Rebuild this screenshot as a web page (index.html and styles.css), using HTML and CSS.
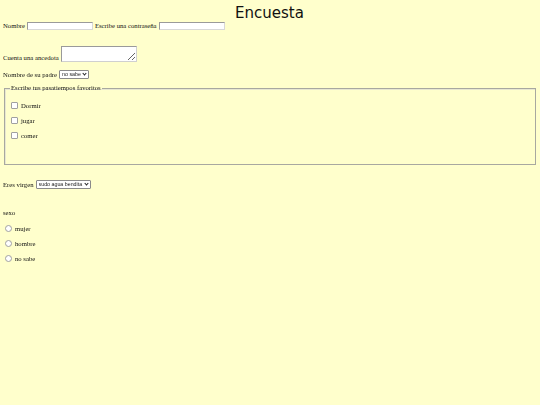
FILE: index.html
```html
<!DOCTYPE html>
<html lang="es">
<head>
<meta charset="utf-8">
<title>Encuesta</title>
<link rel="stylesheet" href="styles.css">
</head>
<body>
<h1 class="title">Encuesta</h1>
<form class="form">
  <div class="row row-first">
    <label>Nombre</label>
    <input type="text" class="field">
    <label>Escribe una contraseña</label>
    <input type="password" class="field">
  </div>
  <div class="row row-textarea">
    <label>Cuenta una ancedota</label>
    <textarea class="area"></textarea>
  </div>
  <div class="row row-padre">
    <label>Nombre de su padre</label>
    <span class="sel"><select class="pick"><option>no sabe</option></select></span>
  </div>
  <fieldset class="box">
    <legend class="legend">Escribe tus pasatiempos favoritos</legend>
    <div class="check"><span class="cb"></span><span>Dormir</span></div>
    <div class="check"><span class="cb"></span><span>jugar</span></div>
    <div class="check"><span class="cb"></span><span>comer</span></div>
  </fieldset>
  <div class="row row-virgen">
    <label>Eres virgen</label>
    <span class="sel"><select class="pick pick-wide"><option>sudo agua bendita</option></select></span>
  </div>
  <div class="sexo">sexo</div>
  <div class="radio"><span class="rb"></span><span>mujer</span></div>
  <div class="radio"><span class="rb"></span><span>hombre</span></div>
  <div class="radio"><span class="rb"></span><span>no sabe</span></div>
</form>
</body>
</html>
```
FILE: styles.css
```css
html, body {
  background: #ffffcc;
}
body {
  margin: 4px 4px 4px 3px;
  font-family: "Liberation Serif", serif;
  font-size: 6.7px;
  color: #111;
}
.title {
  font-family: "DejaVu Sans", sans-serif;
  font-weight: normal;
  font-size: 15px;
  line-height: 18px;
  text-align: center;
  margin: 0;
  color: #111;
}
.row {
  display: flex;
  align-items: flex-end;
  gap: 2px;
  line-height: 8px;
}
.row-first {
  align-items: center;
  height: 8px;
}
.row-textarea {
  margin-top: 16px;
}
.row-padre {
  margin-top: 8px;
  align-items: center;
}
.row-virgen {
  margin-top: 15px;
  align-items: center;
}
.field {
  box-sizing: border-box;
  width: 66px;
  height: 8px;
  margin: 0;
  padding: 0;
  border: 1px solid #9a9a9a;
  border-right-color: #d8d8d8;
  border-bottom-color: #d8d8d8;
  background: #fff;
}
.area {
  box-sizing: border-box;
  width: 76px;
  height: 16px;
  margin: 0;
  padding: 0;
  resize: both;
  border: 1px solid #9a9a9a;
  border-right-color: #d0d0d0;
  border-bottom-color: #d0d0d0;
  background: #fff;
}
.sel {
  position: relative;
  display: inline-block;
  height: 9px;
}
.sel::after {
  content: "";
  position: absolute;
  right: 3px;
  top: 2px;
  width: 2px;
  height: 2px;
  border-right: 1px solid #222;
  border-bottom: 1px solid #222;
  transform: rotate(45deg);
  pointer-events: none;
}
.pick {
  -webkit-appearance: none;
  appearance: none;
  box-sizing: border-box;
  display: block;
  height: 9px;
  width: 30px;
  margin: 0;
  padding: 0 6px 0 2px;
  font-family: "Liberation Sans", sans-serif;
  font-size: 5.3px;
  line-height: 7px;
  border: 1px solid #8a8a8a;
  border-radius: 1px;
  background: #fff;
  color: #222;
}
.pick-wide {
  width: 55px;
}
.box {
  margin: 5px 0 0 1px;
  padding: 4px 6px 17px 6px;
  border: 1px solid #a8a8a0;
  box-shadow: inset 1px 1px 0 #e8e8d0;
  height: 58px;
}
.legend {
  padding: 0 1px;
  margin-left: -1px;
  line-height: 8px;
}
.check {
  display: flex;
  align-items: center;
  gap: 3px;
  height: 8px;
  margin-top: 7px;
}
.check:first-of-type {
  margin-top: 5px;
}
.cb {
  width: 5px;
  height: 5px;
  border: 1px solid #a0a0a0;
  border-radius: 1px;
  background: #fff;
}
.sexo {
  margin-top: 20px;
  line-height: 8px;
}
.radio {
  display: flex;
  align-items: center;
  gap: 3px;
  height: 8px;
  margin-top: 7px;
  padding-left: 2px;
}
.radio:first-of-type {
  margin-top: 8px;
}
.rb {
  width: 5px;
  height: 5px;
  border: 1px solid #a0a0a0;
  border-radius: 50%;
  background: #fff;
}
```
